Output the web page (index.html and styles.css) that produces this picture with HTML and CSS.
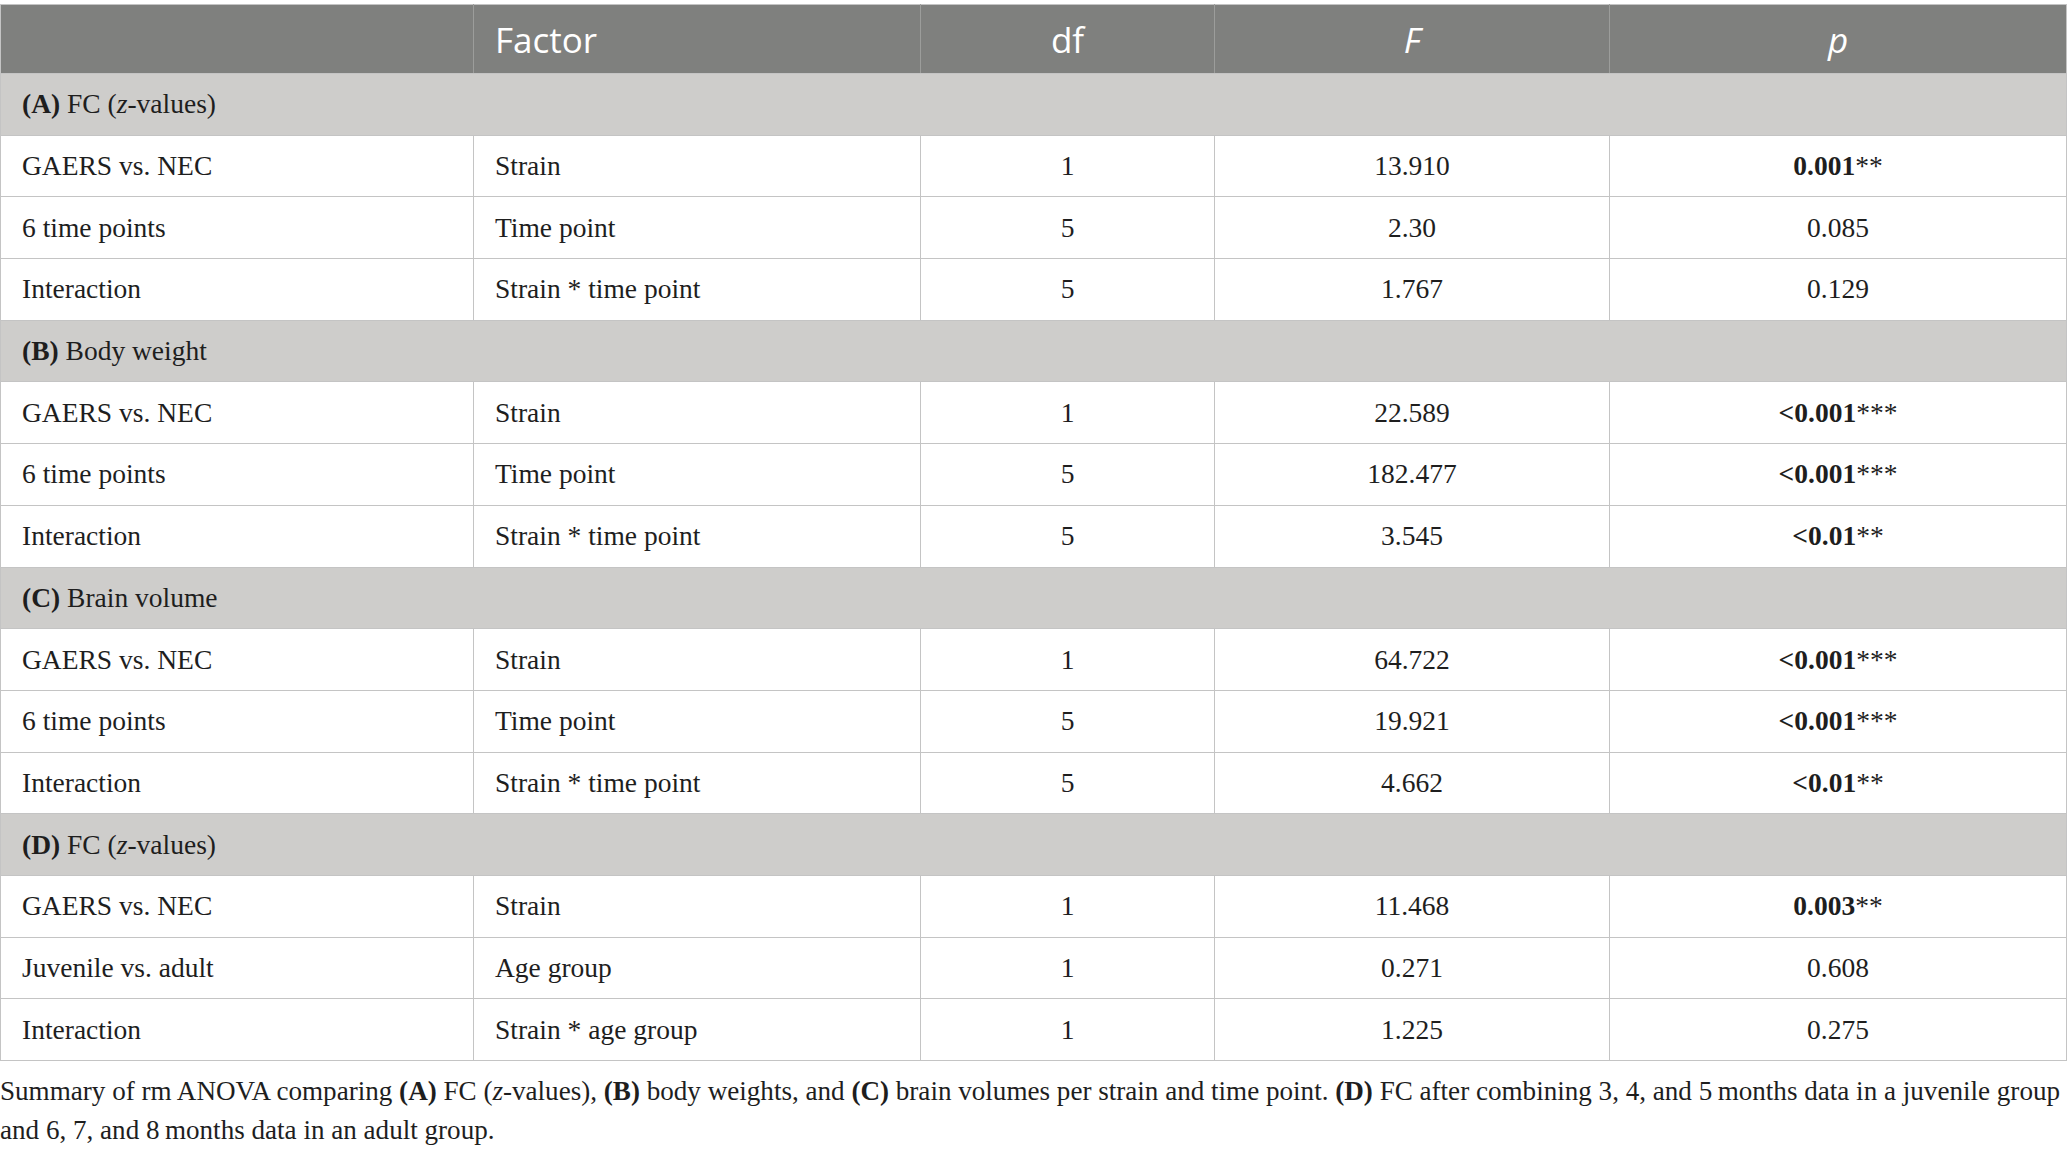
FILE: index.html
```html
<!DOCTYPE html>
<html lang="en">
<head>
<meta charset="utf-8">
<title>rm ANOVA summary</title>
<link rel="stylesheet" href="styles.css">
</head>
<body>
<div class="wrap">
<table class="tbl">
  <colgroup>
    <col class="c1"><col class="c2"><col class="c3"><col class="c4"><col class="c5">
  </colgroup>
  <thead>
    <tr>
      <th class="left"></th>
      <th class="left">Factor</th>
      <th>df</th>
      <th><i>F</i></th>
      <th><i>p</i></th>
    </tr>
  </thead>
  <tbody>
    <tr class="sec"><td colspan="5"><b>(A)</b> FC (<i>z</i>-values)</td></tr>
    <tr><td>GAERS vs. NEC</td><td>Strain</td><td class="ctr">1</td><td class="ctr">13.910</td><td class="ctr"><b>0.001</b>**</td></tr>
    <tr><td>6 time points</td><td>Time point</td><td class="ctr">5</td><td class="ctr">2.30</td><td class="ctr">0.085</td></tr>
    <tr><td>Interaction</td><td>Strain * time point</td><td class="ctr">5</td><td class="ctr">1.767</td><td class="ctr">0.129</td></tr>
    <tr class="sec"><td colspan="5"><b>(B)</b> Body weight</td></tr>
    <tr><td>GAERS vs. NEC</td><td>Strain</td><td class="ctr">1</td><td class="ctr">22.589</td><td class="ctr"><b>&lt;0.001</b>***</td></tr>
    <tr><td>6 time points</td><td>Time point</td><td class="ctr">5</td><td class="ctr">182.477</td><td class="ctr"><b>&lt;0.001</b>***</td></tr>
    <tr><td>Interaction</td><td>Strain * time point</td><td class="ctr">5</td><td class="ctr">3.545</td><td class="ctr"><b>&lt;0.01</b>**</td></tr>
    <tr class="sec"><td colspan="5"><b>(C)</b> Brain volume</td></tr>
    <tr><td>GAERS vs. NEC</td><td>Strain</td><td class="ctr">1</td><td class="ctr">64.722</td><td class="ctr"><b>&lt;0.001</b>***</td></tr>
    <tr><td>6 time points</td><td>Time point</td><td class="ctr">5</td><td class="ctr">19.921</td><td class="ctr"><b>&lt;0.001</b>***</td></tr>
    <tr><td>Interaction</td><td>Strain * time point</td><td class="ctr">5</td><td class="ctr">4.662</td><td class="ctr"><b>&lt;0.01</b>**</td></tr>
    <tr class="sec"><td colspan="5"><b>(D)</b> FC (<i>z</i>-values)</td></tr>
    <tr><td>GAERS vs. NEC</td><td>Strain</td><td class="ctr">1</td><td class="ctr">11.468</td><td class="ctr"><b>0.003</b>**</td></tr>
    <tr><td>Juvenile vs. adult</td><td>Age group</td><td class="ctr">1</td><td class="ctr">0.271</td><td class="ctr">0.608</td></tr>
    <tr><td>Interaction</td><td>Strain * age group</td><td class="ctr">1</td><td class="ctr">1.225</td><td class="ctr">0.275</td></tr>
  </tbody>
</table>
<p class="caption">Summary of rm ANOVA comparing <b>(A)</b> FC (<i>z</i>-values), <b>(B)</b> body weights, and <b>(C)</b> brain volumes per strain and time point. <b>(D)</b> FC after combining 3, 4, and 5&#8201;months data in a juvenile group and 6, 7, and 8&#8201;months data in an adult group.</p>
</div>
</body>
</html>
```

FILE: styles.css
```css
html, body {
  margin: 0;
  padding: 0;
  background: #ffffff;
}

.wrap {
  padding-top: 4px;
  width: 2066px;
}

.tbl {
  border-collapse: collapse;
  table-layout: fixed;
  width: 2066px;
  font-family: "Liberation Serif", "Times New Roman", serif;
  font-size: 27.5px;
  color: #1e1e1e;
  border: 1px solid #c4c4c4;
}

.c1 { width: 473px; }
.c2 { width: 447px; }
.c3 { width: 294px; }
.c4 { width: 395px; }
.c5 { width: 457px; }

.tbl th {
  height: 68px;
  padding: 0;
  background: #7f807e;
  color: #ffffff;
  font-family: "Open Sans", "DejaVu Sans", sans-serif;
  font-weight: 400;
  font-size: 35px;
  text-align: center;
  border-left: 1px solid #9c9d9b;
  border-bottom: 1px solid #c4c4c4;
}

.tbl th:first-child { border-left: 1px solid #c4c4c4; }

.tbl th.left {
  text-align: left;
  padding-left: 21px;
}

.tbl td {
  height: 60.7px;
  padding: 0 0 0 21px;
  border: 1px solid #c4c4c4;
  vertical-align: middle;
}

.tbl td.ctr {
  text-align: center;
  padding-left: 0;
}

.tbl tr.sec td {
  background: #cecdcb;
}

.caption {
  margin: 11px 0 0 0;
  width: 2066px;
  font-family: "Liberation Serif", "Times New Roman", serif;
  font-size: 27.1px;
  line-height: 39px;
  color: #1e1e1e;
}
```
